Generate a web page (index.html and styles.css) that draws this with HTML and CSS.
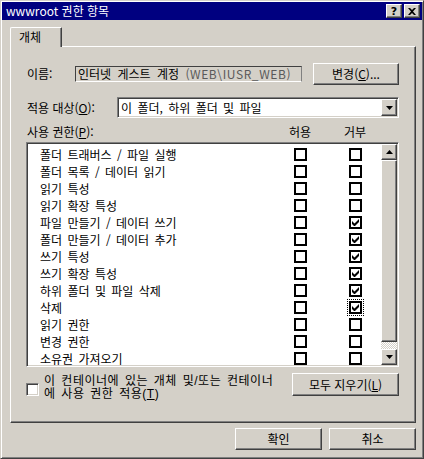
FILE: index.html
```html
<!DOCTYPE html>
<html lang="ko">
<head>
<meta charset="utf-8">
<title>wwwroot 권한 항목</title>
<link rel="stylesheet" href="styles.css">
</head>
<body>
<div class="window">
  <div class="titlebar">
    <span class="title">wwwroot 권한 항목</span>
    <div class="caption-btns">
      <div class="cap-btn btn3d"><span class="q">?</span></div>
      <div class="cap-btn btn3d"><svg width="8" height="7" viewBox="0 0 8 7"><path d="M0 0h2l2 2 2-2h2L5 3.5 8 7H6L4 5 2 7H0l3-3.5z" fill="#000"/></svg></div>
    </div>
  </div>
  <div class="tabs"><div class="tab">개체</div></div>
  <div class="panel">
    <div class="row row-name">
      <span class="lbl lbl-name">이름:</span>
      <div class="namefield">인터넷 게스트 계정 <span class="masked">(WEB\IUSR_WEB)</span></div>
      <div class="btn3d btn btn-change">변경(<u>C</u>)...</div>
    </div>
    <div class="row row-apply">
      <span class="lbl lbl-apply">적용 대상(<u>O</u>):</span>
      <div class="combo sunken">
        <span class="combo-text">이 폴더, 하위 폴더 및 파일</span>
        <div class="combo-btn btn3d"><svg width="7" height="4" viewBox="0 0 7 4"><path d="M0 0h7L3.5 4z" fill="#000"/></svg></div>
      </div>
    </div>
    <div class="row row-head">
      <span class="lbl head-perm">사용 권한(<u>P</u>):</span>
      <span class="head-col">허용</span>
      <span class="head-col head-deny">거부</span>
    </div>
    <div class="listbox sunken">
      <div class="list">
        <div class="item"><span class="item-name">폴더 트래버스 / 파일 실행</span><span class="cb"></span><span class="cb"></span></div>
        <div class="item"><span class="item-name">폴더 목록 / 데이터 읽기</span><span class="cb"></span><span class="cb"></span></div>
        <div class="item"><span class="item-name">읽기 특성</span><span class="cb"></span><span class="cb"></span></div>
        <div class="item"><span class="item-name">읽기 확장 특성</span><span class="cb"></span><span class="cb"></span></div>
        <div class="item"><span class="item-name">파일 만들기 / 데이터 쓰기</span><span class="cb"></span><span class="cb"><svg class="check" width="7" height="7" viewBox="0 0 7 7"><path d="M0 2L2.5 4.5L7 0V3L3 7H2L0 5Z"/></svg></span></div>
        <div class="item"><span class="item-name">폴더 만들기 / 데이터 추가</span><span class="cb"></span><span class="cb"><svg class="check" width="7" height="7" viewBox="0 0 7 7"><path d="M0 2L2.5 4.5L7 0V3L3 7H2L0 5Z"/></svg></span></div>
        <div class="item"><span class="item-name">쓰기 특성</span><span class="cb"></span><span class="cb"><svg class="check" width="7" height="7" viewBox="0 0 7 7"><path d="M0 2L2.5 4.5L7 0V3L3 7H2L0 5Z"/></svg></span></div>
        <div class="item"><span class="item-name">쓰기 확장 특성</span><span class="cb"></span><span class="cb"><svg class="check" width="7" height="7" viewBox="0 0 7 7"><path d="M0 2L2.5 4.5L7 0V3L3 7H2L0 5Z"/></svg></span></div>
        <div class="item"><span class="item-name">하위 폴더 및 파일 삭제</span><span class="cb"></span><span class="cb"><svg class="check" width="7" height="7" viewBox="0 0 7 7"><path d="M0 2L2.5 4.5L7 0V3L3 7H2L0 5Z"/></svg></span></div>
        <div class="item"><span class="item-name">삭제</span><span class="cb"></span><span class="cb focus"><svg class="check" width="7" height="7" viewBox="0 0 7 7"><path d="M0 2L2.5 4.5L7 0V3L3 7H2L0 5Z"/></svg></span></div>
        <div class="item"><span class="item-name">읽기 권한</span><span class="cb"></span><span class="cb"></span></div>
        <div class="item"><span class="item-name">변경 권한</span><span class="cb"></span><span class="cb"></span></div>
        <div class="item"><span class="item-name">소유권 가져오기</span><span class="cb"></span><span class="cb"></span></div>
      </div>
      <div class="scrollbar">
        <div class="sb-btn btn3d"><svg width="7" height="4" viewBox="0 0 7 4"><path d="M3.5 0L7 4H0z" fill="#000"/></svg></div>
        <div class="sb-thumb btn3d"></div>
        <div class="sb-track"></div>
        <div class="sb-btn btn3d"><svg width="7" height="4" viewBox="0 0 7 4"><path d="M0 0h7L3.5 4z" fill="#000"/></svg></div>
      </div>
    </div>
    <div class="row row-bottom">
      <span class="chk3d sunken"></span>
      <div class="inherit-text">
        <div class="line">이 컨테이너에 있는 개체 및/또는 컨테이너</div>
        <div class="line">에 사용 권한 적용(<u>T</u>)</div>
      </div>
      <div class="btn3d btn btn-clear">모두 지우기(<u>L</u>)</div>
    </div>
  </div>
  <div class="footer">
    <div class="btn3d btn">확인</div>
    <div class="btn3d btn">취소</div>
  </div>
</div>
</body>
</html>
```

FILE: styles.css
```css
html, body {
  margin: 0;
  padding: 0;
}
body {
  background: #d4d0c8;
  font: 12px/1 "Noto Sans CJK KR", "DejaVu Sans", sans-serif;
  color: #000;
  word-spacing: 2px;
}
u {
  text-decoration: underline;
  text-underline-offset: 1px;
}

.window {
  width: 424px;
  height: 459px;
  box-sizing: border-box;
  border: 1px solid;
  border-color: #d4d0c8 #404040 #404040 #d4d0c8;
  box-shadow: inset 1px 1px #fff, inset -1px -1px #808080;
  padding: 1px;
  background: #d4d0c8;
  overflow: hidden;
}

/* 3D helpers */
.btn3d {
  background: #d4d0c8;
  box-sizing: border-box;
  border: 1px solid;
  border-color: #fff #404040 #404040 #fff;
  box-shadow: inset -1px -1px #808080;
}
.sunken {
  box-sizing: border-box;
  border: 1px solid;
  border-color: #808080 #fff #fff #808080;
  box-shadow: inset 1px 1px #404040, inset -1px -1px #d4d0c8;
  padding: 1px;
}

/* title bar */
.titlebar {
  height: 18px;
  background: #000080;
  color: #fff;
  display: flex;
  align-items: center;
  justify-content: space-between;
  padding-left: 4px;
}
.title {
  line-height: 14px;
  white-space: nowrap;
  word-spacing: 0;
}
.caption-btns {
  display: flex;
  gap: 2px;
  margin-right: 2px;
}
.cap-btn {
  width: 16px;
  height: 14px;
  display: flex;
  align-items: center;
  justify-content: center;
}
.q {
  font: bold 11px/1 "DejaVu Sans", sans-serif;
  color: #000;
}

/* tabs */
.tabs {
  height: 19px;
  margin: 7px 0 0 8px;
  display: flex;
}
.tab {
  position: relative;
  z-index: 1;
  width: 52px;
  height: 20px;
  box-sizing: border-box;
  background: #d4d0c8;
  border-left: 1px solid #fff;
  border-top: 1px solid #fff;
  border-right: 1px solid #404040;
  box-shadow: inset -1px 0 #808080;
  border-top-left-radius: 2px;
  border-top-right-radius: 1px;
  padding: 3px 0 0 8px;
  line-height: 12px;
}

/* panel */
.panel {
  height: 377px;
  box-sizing: border-box;
  margin: 0 6px 0 8px;
  border: 1px solid;
  border-color: #fff #404040 #404040 #fff;
  box-shadow: inset -1px -1px #808080;
  padding: 16px 16px 0 15px;
}
.row {
  display: flex;
  align-items: center;
}
.lbl {
  white-space: nowrap;
  box-sizing: border-box;
  padding-left: 1px;
  word-spacing: 0;
}
.row-name {
  height: 22px;
}
.lbl-name {
  width: 49px;
}
.namefield {
  width: 227px;
  height: 16px;
  box-sizing: border-box;
  border: 1px solid;
  border-color: #404040 #808080 #fff #404040;
  padding-left: 2px;
  line-height: 14px;
  white-space: nowrap;
  overflow: hidden;
  word-spacing: 3px;
}
.masked {
  color: #5a5a5a;
  letter-spacing: 0.6px;
  word-spacing: 0;
}
.btn {
  height: 22px;
  display: flex;
  align-items: center;
  justify-content: center;
  white-space: nowrap;
  word-spacing: 0;
}
.btn-change {
  width: 86px;
  margin-left: auto;
}

.row-apply {
  height: 21px;
  margin-top: 12px;
}
.lbl-apply {
  width: 91px;
}
.combo {
  flex: 1;
  height: 21px;
  display: flex;
  align-items: center;
  background: #fff;
}
.combo-text {
  flex: 1;
  padding-left: 2px;
  white-space: nowrap;
}
.combo-btn {
  width: 16px;
  height: 17px;
  display: flex;
  align-items: center;
  justify-content: center;
}

.row-head {
  height: 14px;
  margin-top: 7px;
}
.head-perm {
  width: 257px;
}
.head-col {
  width: 34px;
  text-align: center;
}
.head-deny {
  margin-left: 21px;
}

/* list box */
.listbox {
  margin-top: 3px;
  height: 225px;
  display: flex;
  background: #fff;
}
.list {
  flex: 1;
  overflow: hidden;
  padding-top: 2px;
}
.item {
  height: 17px;
  display: flex;
  align-items: center;
}
.item-name {
  width: 254px;
  padding-left: 12px;
  white-space: nowrap;
}
.cb {
  width: 13px;
  height: 13px;
  box-sizing: border-box;
  border: 2px solid #000;
  background: #fff;
  display: flex;
  align-items: center;
  justify-content: center;
}
.cb + .cb {
  margin-left: 42px;
}
.check {
  fill: #000;
}
.focus {
  outline: 1px dotted #000;
  outline-offset: 1px;
}

.scrollbar {
  width: 16px;
  display: flex;
  flex-direction: column;
}
.sb-btn {
  height: 16px;
  display: flex;
  align-items: center;
  justify-content: center;
}
.sb-thumb {
  height: 182px;
}
.sb-track {
  flex: 1;
  background: repeating-conic-gradient(#fff 0 25%, #d4d0c8 0 50%) 0 0 / 2px 2px;
}

/* bottom row */
.row-bottom {
  align-items: flex-start;
  margin-top: 6px;
  height: 23px;
}
.chk3d {
  width: 13px;
  height: 13px;
  margin-top: 10px;
  background: #fff;
  flex: none;
}
.inherit-text {
  margin-left: 5px;
  margin-top: 2px;
  white-space: nowrap;
  letter-spacing: 0.5px;
  font-family: "Liberation Sans", "Noto Sans CJK KR", sans-serif;
}
.line {
  height: 13px;
  line-height: 13px;
}
.btn-clear {
  width: 107px;
  height: 23px;
  margin-left: auto;
}

/* footer */
.footer {
  display: flex;
  justify-content: flex-end;
  gap: 7px;
  margin: 5px 6px 0 0;
}
.footer .btn {
  width: 87px;
  height: 22px;
}
```
